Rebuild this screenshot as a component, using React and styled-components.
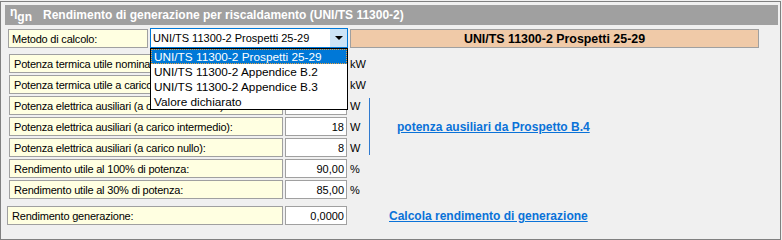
import React from 'react'
import styled, { createGlobalStyle } from 'styled-components'

const GlobalStyle = createGlobalStyle`
  html, body {
    margin: 0;
    padding: 0;
    background: #f0f0f0;
  }
  body {
    font-family: "Liberation Sans", Arial, sans-serif;
    font-size: 11px;
    color: #000;
  }
`

const Panel = styled.div`
  box-sizing: border-box;
  width: 781px;
  height: 239px;
  margin-top: 1px;
  border: 1px solid #808080;
  background: #f0f0f0;
  padding: 3px 2px 0 4px;
`

const TitleBar = styled.div`
  height: 20px;
  background: #a0a0a0;
  display: flex;
  align-items: center;
  padding-left: 5px;
  color: #fff;
  font-weight: bold;
  font-size: 12px;
`

const Symbol = styled.span`
  display: inline-flex;
  align-items: flex-start;
  width: 28px;
  height: 16px;
  margin-right: 5px;
  font-size: 12px;
  line-height: 11px;

  sub {
    font-size: 12px;
    line-height: 12px;
    margin-top: 4px;
    vertical-align: baseline;
  }
`

const MethodRow = styled.div`
  display: flex;
  align-items: flex-end;
  margin: 3px 0 0 3px;
  height: 20px;
`

const LabelBox = styled.div`
  grid-column: 1;
  box-sizing: border-box;
  height: 19px;
  width: ${p => p.$width || 'auto'};
  margin-left: ${p => p.$shift || 0}px;
  background: #ffffe1;
  border: 1px solid #a0a0a0;
  padding-left: ${p => p.$pad || 4}px;
  display: flex;
  align-items: center;
  white-space: nowrap;
  overflow: hidden;
  letter-spacing: -0.2px;
`

const SelectWrap = styled.div`
  position: relative;
  margin-left: 2px;
  width: 198px;
  height: 20px;
`

const SelectBox = styled.div`
  box-sizing: border-box;
  height: 20px;
  border: 1px solid #0078d7;
  background: #fff;
  display: flex;
  align-items: center;
  padding-left: 2px;
`

const SelectText = styled.span`
  flex: 1;
  white-space: nowrap;
`

const ArrowButton = styled.div`
  width: 17px;
  align-self: stretch;
  background: #cce4f7;
  display: flex;
  align-items: center;
  justify-content: center;
`

const Caret = styled.span`
  width: 0;
  height: 0;
  border-left: 4px solid transparent;
  border-right: 4px solid transparent;
  border-top: 4px solid #000;
`

const DropList = styled.ul`
  position: absolute;
  top: 20px;
  left: 0;
  z-index: 5;
  box-sizing: border-box;
  width: 198px;
  margin: 0;
  padding: 0;
  list-style: none;
  background: #fff;
  border: 1px solid #000;
`

const DropItem = styled.li`
  box-sizing: border-box;
  height: 15px;
  padding-left: 3px;
  display: flex;
  align-items: center;
  font-size: 11.8px;
  white-space: nowrap;
  background: ${p => (p.$active ? '#0078d7' : '#fff')};
  color: ${p => (p.$active ? '#fff' : '#000')};
  outline: ${p => (p.$active ? '1px dotted #e8a040' : 'none')};
  outline-offset: -1px;
`

const MethodBadge = styled.div`
  box-sizing: border-box;
  margin-left: 2px;
  width: 409px;
  height: 19px;
  background: #f0caa8;
  border: 1px solid #a0a0a0;
  display: flex;
  align-items: center;
  justify-content: center;
  font-weight: bold;
  font-size: 12.4px;
`

const FieldGrid = styled.div`
  display: grid;
  grid-template-columns: 274px 62px 19px 1fr;
  grid-auto-rows: 19px;
  column-gap: 2px;
  row-gap: 2px;
  margin: ${p => p.$top || 0}px 0 0 4px;
`

const ValueBox = styled.div`
  grid-column: 2;
  box-sizing: border-box;
  height: 19px;
  background: #fff;
  border: 1px solid #a0a0a0;
  padding-right: 2px;
  display: flex;
  align-items: center;
  justify-content: flex-end;
`

const Unit = styled.div`
  grid-column: 3;
  display: flex;
  align-items: center;
  padding-left: 1px;
`

const Bracket = styled.div`
  grid-column: 4;
  grid-row: ${p => p.$row} / span ${p => p.$span};
  margin: 2px 0 2px -1px;
  border-left: ${p => (p.$line ? '1px solid #2f7ad0' : 'none')};
  display: flex;
  align-items: center;
  padding-left: ${p => p.$indent}px;
`

const Link = styled.a`
  color: #0a72d8;
  font-weight: bold;
  font-size: 12px;
  text-decoration: underline;
  white-space: nowrap;
  cursor: pointer;
`

const fields = [
  { label: 'Potenza termica utile nominale:', value: '24,00', unit: 'kW' },
  { label: 'Potenza termica utile a carico intermedio:', value: '7,20', unit: 'kW' },
  { label: 'Potenza elettrica ausiliari (a carico nominale):', value: '40', unit: 'W' },
  { label: 'Potenza elettrica ausiliari (a carico intermedio):', value: '18', unit: 'W' },
  { label: 'Potenza elettrica ausiliari (a carico nullo):', value: '8', unit: 'W' },
  { label: 'Rendimento utile al 100% di potenza:', value: '90,00', unit: '%' },
  { label: 'Rendimento utile al 30% di potenza:', value: '85,00', unit: '%' },
]

const options = [
  'UNI/TS 11300-2 Prospetti 25-29',
  'UNI/TS 11300-2 Appendice B.2',
  'UNI/TS 11300-2 Appendice B.3',
  'Valore dichiarato',
]

const App = () => {
  return (
    <>
      <GlobalStyle />
      <Panel>
        <TitleBar>
          <Symbol>η<sub>gn</sub></Symbol>
          Rendimento di generazione per riscaldamento (UNI/TS 11300-2)
        </TitleBar>

        <MethodRow>
          <LabelBox $width="140px" $pad={3}>Metodo di calcolo:</LabelBox>
          <SelectWrap>
            <SelectBox>
              <SelectText>UNI/TS 11300-2 Prospetti 25-29</SelectText>
              <ArrowButton><Caret /></ArrowButton>
            </SelectBox>
            <DropList>
              {options.map((o, i) => (
                <DropItem key={o} $active={i === 0}>{o}</DropItem>
              ))}
            </DropList>
          </SelectWrap>
          <MethodBadge>UNI/TS 11300-2 Prospetti 25-29</MethodBadge>
        </MethodRow>

        <FieldGrid $top={6}>
          <Bracket $row={3} $span={3} $line $indent={27}>
            <Link>potenza ausiliari da Prospetto B.4</Link>
          </Bracket>
          {fields.map(f => (
            <React.Fragment key={f.label}>
              <LabelBox>{f.label}</LabelBox>
              <ValueBox>{f.value}</ValueBox>
              <Unit>{f.unit}</Unit>
            </React.Fragment>
          ))}
        </FieldGrid>

        <FieldGrid $top={7}>
          <Bracket $row={1} $span={1} $indent={20}>
            <Link>Calcola rendimento di generazione</Link>
          </Bracket>
          <LabelBox $shift={-2}>Rendimento generazione:</LabelBox>
          <ValueBox>0,0000</ValueBox>
          <Unit />
        </FieldGrid>
      </Panel>
    </>
  )
}

export default App
